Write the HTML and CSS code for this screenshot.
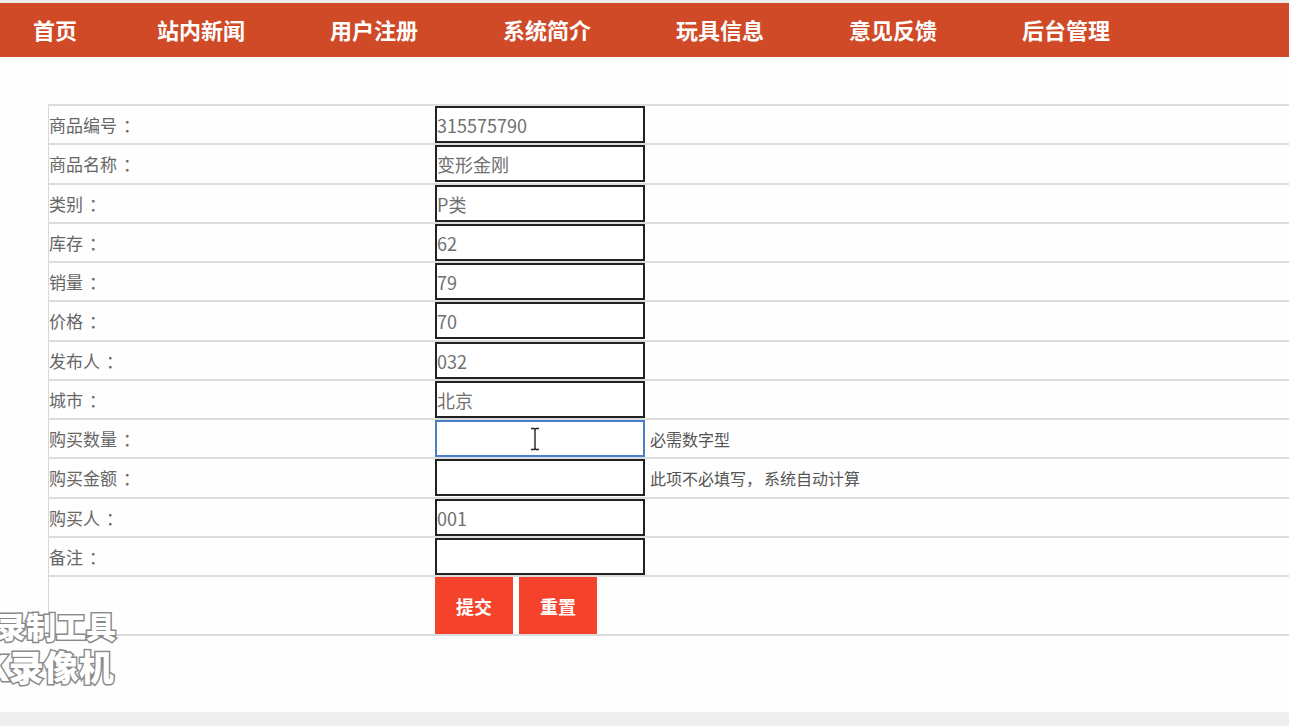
FILE: index.html
```html
<!DOCTYPE html>
<html lang="zh">
<head>
<meta charset="utf-8">
<title>商品购买</title>
<link rel="stylesheet" href="styles.css">
</head>
<body>
<div class="topline"></div>
<nav class="nav">
  <a class="nav-item first">首页</a>
  <a class="nav-item">站内新闻</a>
  <a class="nav-item">用户注册</a>
  <a class="nav-item">系统简介</a>
  <a class="nav-item">玩具信息</a>
  <a class="nav-item">意见反馈</a>
  <a class="nav-item">后台管理</a>
</nav>
<main class="content">
  <table class="form-table">
    <tr><td class="label">商品编号<span class="colon">：</span></td><td class="field"><div class="box">315575790</div></td></tr>
    <tr><td class="label">商品名称<span class="colon">：</span></td><td class="field"><div class="box">变形金刚</div></td></tr>
    <tr><td class="label">类别<span class="colon">：</span></td><td class="field"><div class="box">P类</div></td></tr>
    <tr><td class="label">库存<span class="colon">：</span></td><td class="field"><div class="box">62</div></td></tr>
    <tr><td class="label">销量<span class="colon">：</span></td><td class="field"><div class="box">79</div></td></tr>
    <tr><td class="label">价格<span class="colon">：</span></td><td class="field"><div class="box">70</div></td></tr>
    <tr><td class="label">发布人<span class="colon">：</span></td><td class="field"><div class="box">032</div></td></tr>
    <tr><td class="label">城市<span class="colon">：</span></td><td class="field"><div class="box">北京</div></td></tr>
    <tr><td class="label">购买数量<span class="colon">：</span></td><td class="field"><div class="row-in"><div class="box focus"><svg class="ibeam" width="10" height="24" viewBox="0 0 10 24"><path d="M1 1.5h3l1 1 1-1h3M5 2.5v19M1 22.5h3l1-1 1 1h3" fill="none" stroke="#222" stroke-width="1.4"/></svg></div><span class="hint">必需数字型</span></div></td></tr>
    <tr><td class="label">购买金额<span class="colon">：</span></td><td class="field"><div class="row-in"><div class="box"></div><span class="hint">此项不必填写<span class="comma">，</span>系统自动计算</span></div></td></tr>
    <tr><td class="label">购买人<span class="colon">：</span></td><td class="field"><div class="box">001</div></td></tr>
    <tr><td class="label">备注<span class="colon">：</span></td><td class="field"><div class="box"></div></td></tr>
    <tr class="btn-row"><td class="label"></td><td class="field"><div class="btns"><button class="btn">提交</button><button class="btn">重置</button></div></td></tr>
  </table>
</main>
<div class="watermark"><div class="wm1">录制工具</div><div class="wm2">K录像机</div></div>
<footer class="footer"></footer>
</body>
</html>
```
FILE: styles.css
```css
html, body {
  margin: 0;
  padding: 0;
  background: #fdfefd;
  overflow: hidden;
}
body {
  width: 1289px;
  height: 726px;
  position: relative;
  font-family: "Microsoft YaHei", "Noto Sans CJK SC", sans-serif;
}
.topline {
  height: 3px;
  background: #ececec;
}
.nav {
  height: 54px;
  background: #d04a27;
  display: flex;
  align-items: center;
  padding-left: 33px;
  gap: 85px;
}
.nav-item {
  color: #fff;
  font-size: 22px;
  font-weight: bold;
  line-height: 54px;
  margin-top: -3px;
}
.nav-item.first {
  margin-right: -5px;
}
.content {
  padding: 47px 0 0 48px;
  height: 609px;
  box-sizing: border-box;
}
.form-table {
  border-collapse: collapse;
  width: 1260px;
}
.form-table td {
  border-top: 2px solid #dcdcdc;
  border-bottom: 2px solid #dcdcdc;
  padding: 0;
  height: 37.25px;
}
.form-table td.label {
  border-left: 1px solid #d8d8d8;
  width: 386px;
  color: #666;
  font-size: 17px;
  vertical-align: middle;
}
.colon {
  margin-left: 6px;
}
.comma {
  margin-right: 2px;
}
.field {
  vertical-align: middle;
}
.row-in {
  display: flex;
  align-items: center;
}
.box {
  position: relative;
  box-sizing: border-box;
  width: 210px;
  height: 37px;
  border: 2px solid #222;
  background: #fff;
  color: #707070;
  font-size: 18px;
  line-height: 34px;
  white-space: nowrap;
}
.box.focus {
  border-color: #4a7fc8;
}
.ibeam {
  position: absolute;
  left: 93px;
  top: 5px;
}
.hint {
  margin-left: 5px;
  color: #555;
  font-size: 16px;
}
.btn-row td {
  height: 57px;
}
.btns {
  display: flex;
  gap: 6px;
  height: 57px;
}
.btn {
  width: 78px;
  height: 57px;
  border: 0;
  background: #f5432b;
  color: #fff;
  font-family: "Microsoft YaHei", "Noto Sans CJK SC", sans-serif;
  font-size: 18px;
  font-weight: bold;
  padding: 0;
}
.watermark {
  position: absolute;
  left: -4px;
  top: 610px;
  color: #fff;
  -webkit-text-stroke: 3px #8a8a8a;
  paint-order: stroke fill;
  font-weight: 900;
  line-height: 1;
  font-family: "Noto Sans CJK SC", sans-serif;
}
.wm1 {
  font-size: 30px;
}
.wm2 {
  font-size: 35px;
  margin-top: 8px;
  margin-left: -12px;
}
.footer {
  position: absolute;
  left: 0;
  right: 0;
  bottom: 0;
  height: 14px;
  background: #eeeeee;
}
```
